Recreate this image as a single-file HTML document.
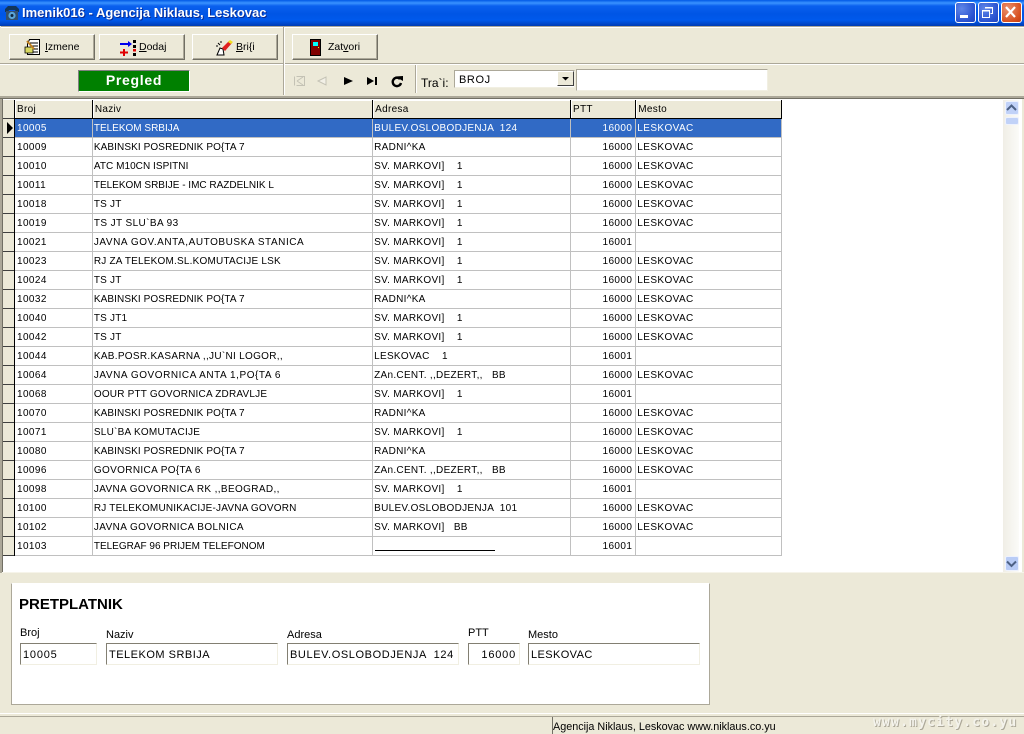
<!DOCTYPE html>
<html><head><meta charset="utf-8"><style>
html,body{margin:0;padding:0;background:#ece9d8}
#r{position:relative;width:1024px;height:734px;overflow:hidden;background:#ece9d8;font-family:"Liberation Sans",Arial,sans-serif;font-size:10px;color:#000}
#r div,#r svg{position:absolute}
.tb{left:0;top:0;width:1024px;height:26px;background:linear-gradient(#0058e6 0,#3a93ff 3px,#0a60ee 6px,#0055e5 14px,#0059ec 20px,#0046c8 24px,#003cb0 26px)}
.title{left:22px;top:5px;font-size:13px;font-weight:bold;color:#fff;white-space:nowrap;text-shadow:1px 1px 0 #0a2a90}
.wb{top:2px;width:21px;height:21px;border:1px solid #fff;border-radius:3px;box-sizing:border-box;background:radial-gradient(circle at 30% 30%,#5f86e8,#2a52d0 70%,#2146c0)}
.btn{top:34px;height:26px;width:86px;box-sizing:border-box;background:#ece9d8;border:1px solid;border-color:#fff #716f64 #716f64 #fff;box-shadow:inset -1px -1px 0 #aca899;font-size:10.5px;white-space:nowrap}
.btn span{position:absolute;top:6px;line-height:13px}
.hl{height:1px;background:#aca899}.hw{height:1px;background:#fff}
.vl{width:1px;background:#aca899}.vw{width:1px;background:#fff}
.grid{left:3px;top:99px;width:1019px;height:473px;background:#fff}
table{position:absolute;left:12px;top:1px;border-collapse:collapse;table-layout:fixed;width:767px;font-size:10px}
td,th{padding:1px 0 0 1px;height:17px;line-height:17px;border-right:1px solid #c0c0c0;border-bottom:1px solid #c0c0c0;white-space:pre;overflow:hidden;font-weight:normal;text-align:left;box-sizing:content-box}
th{background:#ece9d8;border-right:1px solid #000;border-bottom:1px solid #000;box-shadow:inset 1px 1px 0 #fff;padding-left:2px;font-size:10px;letter-spacing:.3px}
td:nth-child(1){letter-spacing:.4px;padding-left:2px}
td:nth-child(3){letter-spacing:.3px}
td:nth-child(4){letter-spacing:.4px}
td:nth-child(5){letter-spacing:.4px}
td.n{text-align:right;padding-right:3px;padding-left:0}
tr.s td{background:#316ac5;color:#fff}
.lab{font-size:11px;white-space:nowrap}
.in{top:643px;height:22px;box-sizing:border-box;background:#fff;border:1px solid;border-color:#827f72 #f1efe2 #f1efe2 #827f72;font-size:11px;line-height:22px;padding-left:2px;white-space:pre}
</style></head><body><div id="r">

<div class="tb"></div>
<svg style="left:4px;top:5px" width="16" height="16" viewBox="0 0 16 16"><path d="M1 4 L4 1 H12 L15 4 V7 H12 L11 5 H5 L4 7 H1Z" fill="#12365a"/><rect x="2" y="6" width="12" height="9" fill="#34506e"/><circle cx="8" cy="10.5" r="3.6" fill="#5aa6d8"/><circle cx="8" cy="10.5" r="1.5" fill="#10263f"/></svg>
<div class="title">Imenik016 - Agencija Niklaus, Leskovac</div>
<div class="wb" style="left:955px"></div>
<div class="wb" style="left:978px"></div>
<div class="wb" style="left:1001px;background:radial-gradient(circle at 30% 30%,#e8906f,#d8501f 70%,#c43c12)"></div>
<svg style="left:955px;top:2px" width="69" height="21" viewBox="0 0 69 21"><rect x="5" y="13" width="8" height="3" fill="#fff"/><path d="M30.5 5.5h7v6h-2M27.5 8.5h7v7h-7z" fill="none" stroke="#fff" stroke-width="1"/><rect x="30" y="5" width="8" height="1.5" fill="#fff"/><rect x="27" y="8" width="8" height="1.5" fill="#fff"/><path d="M51 5 L60 15 M60 5 L51 15" stroke="#fff" stroke-width="2.2" fill="none"/></svg>

<!-- toolbar frames -->
<div class="hl" style="left:1px;top:26px;width:1023px"></div>
<div class="hw" style="left:1px;top:27px;width:1023px"></div>
<div class="hl" style="left:0;top:63px;width:1024px"></div>
<div class="hw" style="left:0;top:64px;width:1024px"></div>
<div class="vl" style="left:283px;top:27px;height:68px"></div>
<div class="vw" style="left:284px;top:27px;height:68px"></div>
<div class="vl" style="left:415px;top:65px;height:28px"></div>
<div class="vw" style="left:416px;top:65px;height:28px"></div>
<div class="hl" style="left:0;top:96px;width:1024px;height:2px;background:#aca899"></div>
<div class="hl" style="left:0;top:98px;width:1024px;height:1px;background:#716f64"></div>

<div class="btn" style="left:9px"><span style="left:35px"><u>I</u>zmene</span></div>
<svg style="left:24px;top:38px" width="18" height="18" viewBox="0 0 18 18"><path d="M5.5 1.5H15.5V16.500H3.500V6Z" fill="#fff" stroke="#000"/><path d="M6 5h8M7 8h7M9 11h5M9 14h5" stroke="#000"/><path d="M1 9h8v6H1z" fill="#d8d860" stroke="#000" stroke-width=".8"/><path d="M3 3L10 11" stroke="#c08020" stroke-width="2"/></svg>
<div class="btn" style="left:99px"><span style="left:39px"><u>D</u>odaj</span></div>
<svg style="left:119px;top:39px" width="18" height="17" viewBox="0 0 18 17"><rect x="1" y="4" width="9" height="2" fill="#0000ee"/><path d="M9 2L13 5L9 8Z" fill="#0000ee"/><rect x="4" y="10" width="2" height="7" fill="#e00000"/><rect x="1" y="12.500" width="8" height="2" fill="#e00000"/><rect x="14" y="1" width="3" height="3" fill="#000"/><rect x="14" y="6" width="3" height="3" fill="#000"/><rect x="14" y="10" width="3" height="2.500" fill="#e00000"/><rect x="14" y="14" width="3" height="3" fill="#000"/></svg>
<div class="btn" style="left:192px"><span style="left:43px"><u>B</u>ri{i</span></div>
<svg style="left:215px;top:39px" width="18" height="18" viewBox="0 0 18 18"><path d="M2 16L5 9L8 10L9 16Z" fill="#fff" stroke="#000"/><path d="M3 4l2 2M1 7h2M6 2v2" stroke="#000"/><path d="M7 9L14 2L17 4L10 12Z" fill="#e02020"/><path d="M13 3L15 1L18 3L16 5Z" fill="#f0e020"/></svg>
<div class="btn" style="left:292px"><span style="left:35px">Zat<u>v</u>ori</span></div>
<svg style="left:310px;top:39px" width="12" height="17" viewBox="0 0 12 17"><rect x=".5" y=".5" width="10" height="16" fill="#800000" stroke="#000"/><rect x="3" y="3" width="5" height="4" fill="#00ffff"/><rect x="8" y="8" width="1" height="1" fill="#ff0"/></svg>

<div style="left:78px;top:70px;width:112px;height:22px;box-sizing:border-box;background:#008000;border:1px solid;border-color:#808080 #fff #fff #808080;color:#fff;font-weight:bold;font-size:14px;line-height:19px;text-align:center;letter-spacing:.7px">Pregled</div>

<svg style="left:290px;top:73px" width="115" height="16" viewBox="0 0 115 16"><path d="M4.500 3.500V12.500M6.500 3.500H14.500V12.500H6.500M7 8L13 4M7 8L13 12" fill="none" stroke="#c4c2b5"/><path d="M28 8L36 4V12Z" fill="#f2f0e6" stroke="#c4c2b5"/><path d="M54 4L63 8L54 12Z" fill="#000"/><path d="M77 4L84 8L77 12Z" fill="#000"/><rect x="85" y="4" width="2" height="8" fill="#000"/><path d="M110 6A4.200 4.200 0 1 0 111 10" fill="none" stroke="#000" stroke-width="2.400"/><path d="M105 3.500L113 3V8Z" fill="#000"/></svg>

<div class="lab" style="left:421px;top:76px;font-size:12px">Tra`i:</div>
<div style="left:454px;top:70px;width:121px;height:18px;box-sizing:border-box;background:#fff;border:1px solid;border-color:#aca899 #f1efe2 #f1efe2 #aca899;font-size:11px;line-height:18px;padding-left:4px;letter-spacing:.6px">BROJ</div>
<div style="left:557px;top:71px;width:17px;height:15px;box-sizing:border-box;background:#ece9d8;border:1px solid;border-color:#fff #404040 #404040 #fff"></div>
<svg style="left:562px;top:77px" width="8" height="4"><path d="M0 0H7L3.500 3.500Z" fill="#000"/></svg>
<div style="left:576px;top:69px;width:192px;height:22px;box-sizing:border-box;background:#fff;border:1px solid;border-color:#aca899 #f1efe2 #f1efe2 #aca899"></div>

<!-- grid -->
<div style="left:0;top:99px;width:2px;height:474px;background:#aca899"></div>
<div style="left:2px;top:99px;width:1px;height:474px;background:#716f64"></div>
<div class="grid">
<table>
<colgroup><col style="width:77px"><col style="width:279px"><col style="width:197px"><col style="width:65px"><col style="width:145px"></colgroup>
<tr><th>Broj</th><th>Naziv</th><th>Adresa</th><th>PTT</th><th>Mesto</th></tr>
<tr class="s"><td>10005</td><td>TELEKOM SRBIJA</td><td>BULEV.OSLOBODJENJA  124</td><td class="n">16000</td><td>LESKOVAC</td></tr>
<tr><td>10009</td><td style="letter-spacing:.1px">KABINSKI POSREDNIK PO{TA 7</td><td>RADNI^KA</td><td class="n">16000</td><td>LESKOVAC</td></tr>
<tr><td>10010</td><td style="letter-spacing:.05px">ATC M10CN ISPITNI</td><td>SV. MARKOVI]    1</td><td class="n">16000</td><td>LESKOVAC</td></tr>
<tr><td>10011</td><td>TELEKOM SRBIJE - IMC RAZDELNIK L</td><td>SV. MARKOVI]    1</td><td class="n">16000</td><td>LESKOVAC</td></tr>
<tr><td>10018</td><td style="letter-spacing:.2px">TS JT</td><td>SV. MARKOVI]    1</td><td class="n">16000</td><td>LESKOVAC</td></tr>
<tr><td>10019</td><td style="letter-spacing:.4px">TS JT SLU`BA 93</td><td>SV. MARKOVI]    1</td><td class="n">16000</td><td>LESKOVAC</td></tr>
<tr><td>10021</td><td style="letter-spacing:.55px">JAVNA GOV.ANTA,AUTOBUSKA STANICA</td><td>SV. MARKOVI]    1</td><td class="n">16001</td><td></td></tr>
<tr><td>10023</td><td style="letter-spacing:.2px">RJ ZA TELEKOM.SL.KOMUTACIJE LSK</td><td>SV. MARKOVI]    1</td><td class="n">16000</td><td>LESKOVAC</td></tr>
<tr><td>10024</td><td style="letter-spacing:.2px">TS JT</td><td>SV. MARKOVI]    1</td><td class="n">16000</td><td>LESKOVAC</td></tr>
<tr><td>10032</td><td style="letter-spacing:.1px">KABINSKI POSREDNIK PO{TA 7</td><td>RADNI^KA</td><td class="n">16000</td><td>LESKOVAC</td></tr>
<tr><td>10040</td><td style="letter-spacing:.2px">TS JT1</td><td>SV. MARKOVI]    1</td><td class="n">16000</td><td>LESKOVAC</td></tr>
<tr><td>10042</td><td style="letter-spacing:.2px">TS JT</td><td>SV. MARKOVI]    1</td><td class="n">16000</td><td>LESKOVAC</td></tr>
<tr><td>10044</td><td style="letter-spacing:.3px">KAB.POSR.KASARNA ,,JU`NI LOGOR,,</td><td>LESKOVAC    1</td><td class="n">16001</td><td></td></tr>
<tr><td>10064</td><td style="letter-spacing:.55px">JAVNA GOVORNICA ANTA 1,PO{TA 6</td><td>ZAn.CENT. ,,DEZERT,,   BB</td><td class="n">16000</td><td>LESKOVAC</td></tr>
<tr><td>10068</td><td style="letter-spacing:.2px">OOUR PTT GOVORNICA ZDRAVLJE</td><td>SV. MARKOVI]    1</td><td class="n">16001</td><td></td></tr>
<tr><td>10070</td><td style="letter-spacing:.1px">KABINSKI POSREDNIK PO{TA 7</td><td>RADNI^KA</td><td class="n">16000</td><td>LESKOVAC</td></tr>
<tr><td>10071</td><td style="letter-spacing:.25px">SLU`BA KOMUTACIJE</td><td>SV. MARKOVI]    1</td><td class="n">16000</td><td>LESKOVAC</td></tr>
<tr><td>10080</td><td style="letter-spacing:.1px">KABINSKI POSREDNIK PO{TA 7</td><td>RADNI^KA</td><td class="n">16000</td><td>LESKOVAC</td></tr>
<tr><td>10096</td><td style="letter-spacing:.35px">GOVORNICA PO{TA 6</td><td>ZAn.CENT. ,,DEZERT,,   BB</td><td class="n">16000</td><td>LESKOVAC</td></tr>
<tr><td>10098</td><td style="letter-spacing:.37px">JAVNA GOVORNICA RK ,,BEOGRAD,,</td><td>SV. MARKOVI]    1</td><td class="n">16001</td><td></td></tr>
<tr><td>10100</td><td style="letter-spacing:.2px">RJ TELEKOMUNIKACIJE-JAVNA GOVORN</td><td>BULEV.OSLOBODJENJA  101</td><td class="n">16000</td><td>LESKOVAC</td></tr>
<tr><td>10102</td><td style="letter-spacing:.4px">JAVNA GOVORNICA BOLNICA</td><td>SV. MARKOVI]   BB</td><td class="n">16000</td><td>LESKOVAC</td></tr>
<tr><td>10103</td><td>TELEGRAF 96 PRIJEM TELEFONOM</td><td></td><td class="n">16001</td><td></td></tr>
</table>
<div style="left:372px;top:451px;width:120px;height:1px;background:#000"></div>
</div>
<!-- indicator column -->
<div style="left:3px;top:100px;width:11px;height:456px;box-sizing:content-box;background:repeating-linear-gradient(#ece9d8 0,#ece9d8 18px,#404040 18px,#404040 19px);border-right:1px solid #000"></div>
<svg style="left:7px;top:122px" width="6" height="12"><path d="M0 0L6 6L0 12Z" fill="#000"/></svg>

<!-- scrollbar -->
<div style="left:1003px;top:100px;width:16px;height:472px;background:linear-gradient(90deg,#f0eee6,#fbfbf8)"></div>
<div style="left:1005px;top:101px;width:12px;height:12px;background:#c1d2f8;border:1px solid #eef2fd;border-radius:2px"></div>
<svg style="left:1005px;top:103px" width="13" height="10"><path d="M2 7L6.500 2.500L11 7" fill="none" stroke="#4d6185" stroke-width="2"/></svg>
<div style="left:1005px;top:117px;width:12px;height:6px;background:#c1d2f8;border:1px solid #eef2fd;border-radius:2px"></div>
<div style="left:1005px;top:556px;width:12px;height:13px;background:#b9ccf6;border:1px solid #eef2fd;border-radius:2px"></div>
<svg style="left:1005px;top:559px" width="13" height="10"><path d="M2 2.500L6.500 7L11 2.500" fill="none" stroke="#4d6185" stroke-width="2"/></svg>

<div class="hw" style="left:2px;top:572px;width:1022px;background:#f6f4ea"></div>

<!-- panel -->
<div style="left:11px;top:583px;width:699px;height:122px;box-sizing:border-box;background:#fff;border:1px solid;border-color:#fff #aca899 #aca899 #aca899"></div>
<div style="left:19px;top:596px;font-size:15px;font-weight:bold;white-space:nowrap">PRETPLATNIK</div>
<div class="lab" style="left:20px;top:627px">Broj</div>
<div class="lab" style="left:106px;top:629px">Naziv</div>
<div class="lab" style="left:287px;top:629px">Adresa</div>
<div class="lab" style="left:468px;top:627px">PTT</div>
<div class="lab" style="left:528px;top:629px">Mesto</div>
<div class="in" style="left:20px;width:77px;letter-spacing:.8px">10005</div>
<div class="in" style="left:106px;width:172px;letter-spacing:.5px">TELEKOM SRBIJA</div>
<div class="in" style="left:287px;width:172px;letter-spacing:.6px">BULEV.OSLOBODJENJA  124</div>
<div class="in" style="left:468px;width:52px;text-align:right;padding-right:3px;letter-spacing:.8px">16000</div>
<div class="in" style="left:528px;width:172px;letter-spacing:.4px">LESKOVAC</div>

<!-- status -->
<div class="hw" style="left:0;top:713px;width:1024px"></div>
<div class="hl" style="left:0;top:716px;width:1024px"></div>
<div class="vl" style="left:552px;top:717px;height:17px;background:#716f64"></div>
<div class="lab" style="left:553px;top:721px;font-size:10.8px">Agencija Niklaus, Leskovac www.niklaus.co.yu</div>
<div style="left:873px;top:715px;font-family:'DejaVu Sans Mono',monospace;font-size:13px;letter-spacing:1.200px;font-weight:bold;color:#f4f3ec;text-shadow:1px 1px 0 #aca899;white-space:nowrap">www.mycity.co.yu</div>
</div></body></html>
